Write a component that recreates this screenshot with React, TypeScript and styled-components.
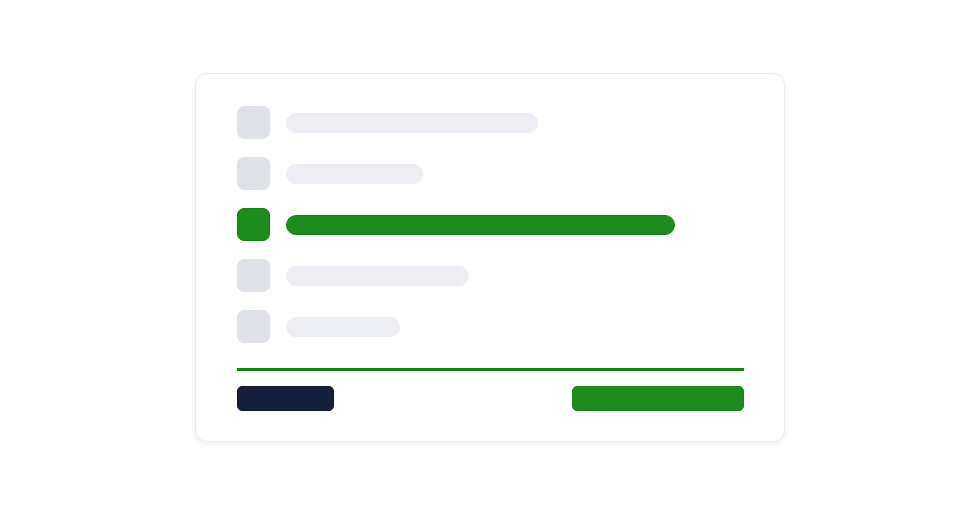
import styled, { createGlobalStyle } from 'styled-components';

const GlobalStyle = createGlobalStyle`
  html, body {
    margin: 0;
    padding: 0;
    background: #ffffff;
    font-family: "Inter", "Liberation Sans", sans-serif;
  }
`;

const Page = styled.div`
  width: 980px;
  height: 515px;
  display: flex;
  align-items: center;
  justify-content: center;
`;

const Card = styled.div`
  box-sizing: border-box;
  width: 590px;
  height: 369px;
  padding: 32px 40px 30px 41px;
  border: 1px solid #eaebef;
  border-radius: 12px;
  background: #fff;
  box-shadow: 0 3px 6px rgba(20, 30, 60, 0.07);
  display: flex;
  flex-direction: column;
`;

const List = styled.div`
  display: flex;
  flex-direction: column;
  gap: 18px;
`;

const Row = styled.div`
  display: flex;
  align-items: center;
  gap: 16px;
`;

const Check = styled.div<{ $active?: boolean }>`
  width: 33px;
  height: 33px;
  box-sizing: border-box;
  border-radius: 7px;
  background: ${(p) => (p.$active ? '#1c8c1c' : '#dfe1e8')};
  border: 1px solid ${(p) => (p.$active ? '#15801a' : '#dfe1e8')};
`;

const Bar = styled.div<{ $active?: boolean }>`
  height: 20px;
  box-sizing: border-box;
  border-radius: 10px;
  background: ${(p) => (p.$active ? '#1c8c1c' : '#eceef4')};
  border: 1px solid ${(p) => (p.$active ? '#15801a' : '#eceef4')};
`;

const Divider = styled.div`
  height: 3px;
  background: #0b880b;
  margin-top: 25px;
`;

const Footer = styled.div`
  display: flex;
  justify-content: space-between;
  margin-top: 15px;
`;

const Button = styled.div<{ $primary?: boolean }>`
  box-sizing: border-box;
  height: 25px;
  border-radius: 5px;
  background: ${(p) => (p.$primary ? '#1c8c1c' : '#151e3d')};
  border: 1px solid ${(p) => (p.$primary ? '#15801a' : '#10183a')};
`;

const rows = [
  { width: 252 },
  { width: 137 },
  { width: 389, active: true },
  { width: 183 },
  { width: 114 },
];

export default function App() {
  return (
    <>
      <GlobalStyle />
      <Page>
        <Card>
          <List>
            {rows.map((r, i) => (
              <Row key={i}>
                <Check $active={r.active} />
                <Bar $active={r.active} style={{ width: r.width }} />
              </Row>
            ))}
          </List>
          <Divider />
          <Footer>
            <Button style={{ width: 97 }} />
            <Button $primary style={{ width: 172 }} />
          </Footer>
        </Card>
      </Page>
    </>
  );
}
